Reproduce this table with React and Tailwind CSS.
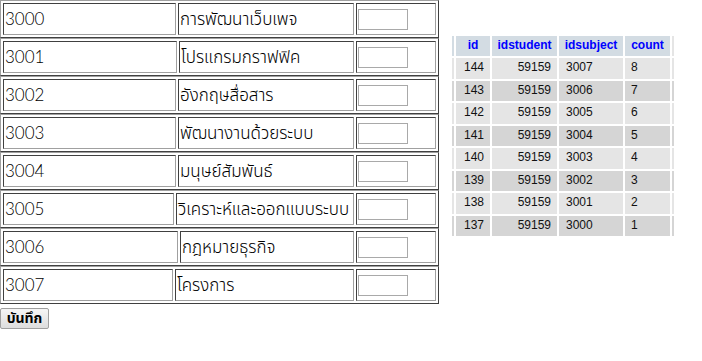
import React from "react";

const subjects = [
  { code: "3000", name: "การพัฒนาเว็บเพจ", w: 173 },
  { code: "3001", name: "โปรแกรมกราฟฟิค", w: 174 },
  { code: "3002", name: "อังกฤษสื่อสาร", w: 173 },
  { code: "3003", name: "พัฒนางานด้วยระบบ", w: 173 },
  { code: "3004", name: "มนุษย์สัมพันธ์", w: 173 },
  { code: "3005", name: "วิเคราะห์และออกแบบระบบ", w: 171 },
  { code: "3006", name: "กฎหมายธุรกิจ", w: 175 },
  { code: "3007", name: "โครงการ", w: 170 },
];

const records = [
  [144, 59159, 3007, 8],
  [143, 59159, 3006, 7],
  [142, 59159, 3005, 6],
  [141, 59159, 3004, 5],
  [140, 59159, 3003, 4],
  [139, 59159, 3002, 3],
  [138, 59159, 3001, 2],
  [137, 59159, 3000, 1],
];

const cell =
  "h-full flex items-center pl-[1px] border border-t-[#404040] border-l-[#404040] border-r-[#a0a0a0] border-b-[#a0a0a0] overflow-visible whitespace-nowrap";

function SubjectRow({ code, name, w }) {
  return (
    <div className="w-[439px] h-[38px] flex gap-[2px] p-[2px] border border-t-[#a0a0a0] border-l-[#a0a0a0] border-r-[#404040] border-b-[#404040]">
      <div className={cell} style={{ width: w }}>
        {code}
      </div>
      <div className={cell} style={{ width: 349 - w }}>
        {name}
      </div>
      <div className={cell + " w-[80px]"}>
        <input
          type="text"
          className="w-[50px] h-[21px] border border-[#a9a9a9] bg-white outline-none"
        />
      </div>
    </div>
  );
}

function RecordTable() {
  const head = "h-[20px] bg-[#d3dce3] pt-[2px] text-center font-bold text-[#0000ff]";
  return (
    <div className="mt-[36px] grid grid-cols-[2px_34px_65px_64px_45px_2px] gap-x-[2px] gap-y-[2px] text-[12px] leading-[15px] font-['Liberation_Sans',Arial,sans-serif] text-[#111]">
      <div className="bg-[#d3dce3]" />
      <div className={head}>id</div>
      <div className={head}>idstudent</div>
      <div className={head}>idsubject</div>
      <div className={head}>count</div>
      <div className="bg-[#e5e5e5]" />
      {records.map((r, i) => {
        const bg = i % 2 === 0 ? "bg-[#e5e5e5]" : "bg-[#d5d5d5]";
        return (
          <React.Fragment key={r[0]}>
            <div className={bg + " h-[20.5px]"} />
            <div className={bg + " h-[20.5px] pt-[2px] pl-[8px]"}>{r[0]}</div>
            <div className={bg + " h-[20.5px] pt-[2px] pr-[6px] text-right"}>{r[1]}</div>
            <div className={bg + " h-[20.5px] pt-[2px] pl-[7px]"}>{r[2]}</div>
            <div className={bg + " h-[20.5px] pt-[2px] pl-[6px]"}>{r[3]}</div>
            <div className={bg + " h-[20.5px]"} />
          </React.Fragment>
        );
      })}
    </div>
  );
}

export default function App() {
  return (
    <div className="w-[702px] h-[361px] bg-white flex items-start gap-[13px]">
      <div className="flex flex-col">
        <div className="flex flex-col font-['Lato','Noto_Sans_Thai','Noto_Sans',sans-serif] font-light text-[17px] text-black">
          {subjects.map((s) => (
            <SubjectRow key={s.code} {...s} />
          ))}
        </div>
        <div className="pt-[1px]">
          <button className="w-[49px] h-[21px] border border-[#a0a0a0] rounded-[2px] bg-gradient-to-b from-[#f6f6f6] to-[#dddddd] text-[14px] font-bold leading-none text-black font-['Liberation_Sans','Noto_Sans_Thai',sans-serif]">
            บันทึก
          </button>
        </div>
      </div>
      <RecordTable />
    </div>
  );
}
